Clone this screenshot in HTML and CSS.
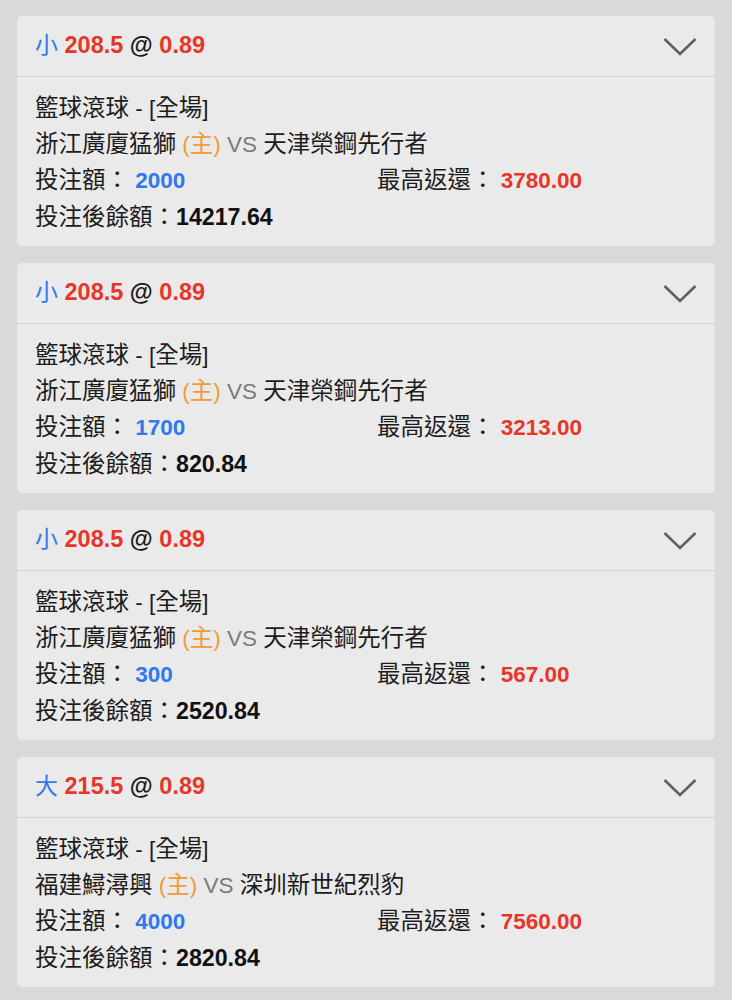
FILE: index.html
```html
<!DOCTYPE html>
<html lang="zh-Hant">
<head>
<meta charset="utf-8">
<link rel="stylesheet" href="styles.css">
</head>
<body>
<div class="list">
  <div class="card">
    <div class="head">
      <div class="title"><span class="blue c">小</span> <span class="red">208.5</span> @ <span class="red">0.89</span></div>
      <svg class="chev" width="34" height="20" viewBox="0 0 34 20"><polyline points="1.5,2 17,17 32.5,2" fill="none" stroke="#5f5f5f" stroke-width="2.6"/></svg>
    </div>
    <div class="body">
      <div class="line"><span class="c">籃球滾球</span> - [<span class="c">全場</span>]</div>
      <div class="line"><span class="c">浙江廣廈猛獅</span> <span class="orange">(<span class="c">主</span>)</span> <span class="gray">VS</span> <span class="c">天津榮鋼先行者</span></div>
      <div class="row">
        <div class="line"><span class="c">投注額：</span> <span class="blue b">2000</span></div>
        <div class="line"><span class="c">最高返還：</span> <span class="red b">3780.00</span></div>
      </div>
      <div class="line"><span class="c">投注後餘額：</span><span class="b bal">14217.64</span></div>
    </div>
  </div>
  <div class="card">
    <div class="head">
      <div class="title"><span class="blue c">小</span> <span class="red">208.5</span> @ <span class="red">0.89</span></div>
      <svg class="chev" width="34" height="20" viewBox="0 0 34 20"><polyline points="1.5,2 17,17 32.5,2" fill="none" stroke="#5f5f5f" stroke-width="2.6"/></svg>
    </div>
    <div class="body">
      <div class="line"><span class="c">籃球滾球</span> - [<span class="c">全場</span>]</div>
      <div class="line"><span class="c">浙江廣廈猛獅</span> <span class="orange">(<span class="c">主</span>)</span> <span class="gray">VS</span> <span class="c">天津榮鋼先行者</span></div>
      <div class="row">
        <div class="line"><span class="c">投注額：</span> <span class="blue b">1700</span></div>
        <div class="line"><span class="c">最高返還：</span> <span class="red b">3213.00</span></div>
      </div>
      <div class="line"><span class="c">投注後餘額：</span><span class="b bal">820.84</span></div>
    </div>
  </div>
  <div class="card">
    <div class="head">
      <div class="title"><span class="blue c">小</span> <span class="red">208.5</span> @ <span class="red">0.89</span></div>
      <svg class="chev" width="34" height="20" viewBox="0 0 34 20"><polyline points="1.5,2 17,17 32.5,2" fill="none" stroke="#5f5f5f" stroke-width="2.6"/></svg>
    </div>
    <div class="body">
      <div class="line"><span class="c">籃球滾球</span> - [<span class="c">全場</span>]</div>
      <div class="line"><span class="c">浙江廣廈猛獅</span> <span class="orange">(<span class="c">主</span>)</span> <span class="gray">VS</span> <span class="c">天津榮鋼先行者</span></div>
      <div class="row">
        <div class="line"><span class="c">投注額：</span> <span class="blue b">300</span></div>
        <div class="line"><span class="c">最高返還：</span> <span class="red b">567.00</span></div>
      </div>
      <div class="line"><span class="c">投注後餘額：</span><span class="b bal">2520.84</span></div>
    </div>
  </div>
  <div class="card">
    <div class="head">
      <div class="title"><span class="blue c">大</span> <span class="red">215.5</span> @ <span class="red">0.89</span></div>
      <svg class="chev" width="34" height="20" viewBox="0 0 34 20"><polyline points="1.5,2 17,17 32.5,2" fill="none" stroke="#5f5f5f" stroke-width="2.6"/></svg>
    </div>
    <div class="body">
      <div class="line"><span class="c">籃球滾球</span> - [<span class="c">全場</span>]</div>
      <div class="line"><span class="c">福建鱘潯興</span> <span class="orange">(<span class="c">主</span>)</span> <span class="gray">VS</span> <span class="c">深圳新世紀烈豹</span></div>
      <div class="row">
        <div class="line"><span class="c">投注額：</span> <span class="blue b">4000</span></div>
        <div class="line"><span class="c">最高返還：</span> <span class="red b">7560.00</span></div>
      </div>
      <div class="line"><span class="c">投注後餘額：</span><span class="b bal">2820.84</span></div>
    </div>
  </div>
</div>
</body>
</html>
```
FILE: styles.css
```css
html, body {
  margin: 0;
  padding: 0;
  background: #d9d9d9;
}
body {
  font-family: "Liberation Sans", Arial, "Noto Sans CJK TC", sans-serif;
  color: #1c1c1c;
}
.list {
  display: flex;
  flex-direction: column;
  gap: 17px;
  padding: 16px 17px 0 17px;
}
.card {
  background: #eaeaea;
  border-radius: 5px;
  height: 230px;
  box-sizing: border-box;
  overflow: hidden;
}
.head {
  height: 60px;
  display: flex;
  align-items: center;
  justify-content: space-between;
  padding: 0 18px;
  border-bottom: 1px solid #d0d0d0;
}
.title {
  font-size: 23.5px;
  font-weight: bold;
  color: #1a1a1a;
  line-height: 30px;
  margin-top: -2px;
}
.title .blue {
  font-weight: normal;
  font-size: 23px;
}
.c {
  font-family: "Noto Sans CJK TC", sans-serif;
  font-size: 23.5px;
  line-height: 1;
}
.chev {
  display: block;
  margin-top: 2px;
}
.body {
  padding: 14px 18px 0 18px;
  font-size: 22.5px;
}
.line {
  height: 36px;
  line-height: 36px;
  white-space: nowrap;
}
.row {
  display: grid;
  grid-template-columns: 342px auto;
}
.blue { color: #2f78f0; }
.red { color: #e8352a; }
.orange { color: #f29a34; }
.gray { color: #7a7a7a; }
.b { font-weight: bold; color: #111; }
.bal { font-size: 23.2px; }
.b.blue { color: #2f78f0; }
.b.red { color: #e8352a; }
```
